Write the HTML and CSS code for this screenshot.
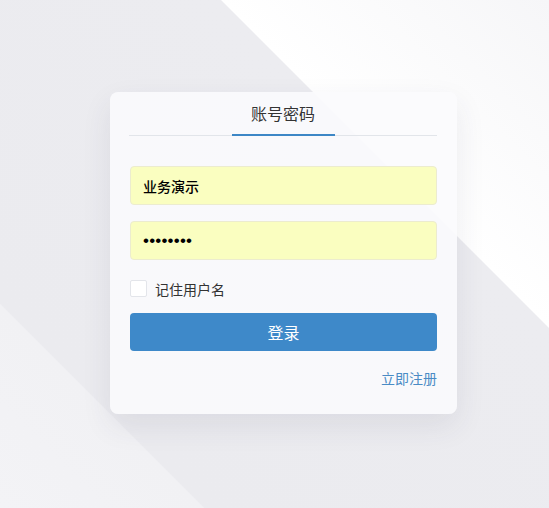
FILE: index.html
```html
<!DOCTYPE html>
<html lang="zh-CN">
<head>
<meta charset="utf-8">
<title>登录</title>
<link rel="stylesheet" href="styles.css">
</head>
<body>
<div class="page">
  <div class="card">
    <div class="tabs">
      <div class="tab active">账号密码</div>
    </div>
    <form class="form">
      <input class="field name" type="text" value="业务演示">
      <input class="field pw" type="password" value="12345678">
      <label class="remember"><span class="box"></span><span>记住用户名</span></label>
      <button class="submit" type="button">登录</button>
      <div class="links"><a class="register" href="#">立即注册</a></div>
    </form>
  </div>
</div>
</body>
</html>
```
FILE: styles.css
```css
* { box-sizing: border-box; }
html, body { margin: 0; height: 100%; }
body {
  font-family: "Microsoft YaHei", "Noto Sans CJK SC", "Noto Sans", sans-serif;
  background:
    linear-gradient(45deg, #f3f3f6 0, #f1f1f4 144px, #ebebef 145px, #ececf0 515px, #ffffff 516px, #f6f6f8 100%);
  overflow: hidden;
}
.page {
  padding: 92px 0 0 110px;
}
.card {
  width: 347px;
  height: 322px;
  background: rgba(250, 251, 253, 0.88);
  border-radius: 8px;
  box-shadow: 0 12px 30px rgba(60, 60, 90, 0.09);
  padding: 0 20px 0 19px;
}
.tabs {
  display: flex;
  justify-content: center;
  border-bottom: 1px solid #e2e5ea;
  height: 44px;
}
.tab {
  width: 103px;
  height: 44px;
  line-height: 42px;
  text-align: center;
  font-size: 16px;
  color: #333;
  border-bottom: 2px solid #3d87c6;
}
.form {
  display: flex;
  flex-direction: column;
  padding: 30px 0 0 1px;
}
.field {
  height: 39px;
  border: 1px solid #ececcf;
  border-radius: 4px;
  background: #fafec0;
  padding: 0 12px;
  font-family: inherit;
  font-size: 14px;
  color: #000;
  outline: none;
}
.field.name { font-weight: 500; }
.field.pw {
  font-family: "Liberation Sans", Arial, sans-serif;
  font-size: 17px;
  letter-spacing: 0.2px;
  padding-top: 1px;
}
.field + .field { margin-top: 16px; }
.remember {
  display: flex;
  align-items: center;
  gap: 8px;
  margin-top: 20px;
  height: 17px;
  font-size: 14px;
  color: #333;
}
.box {
  width: 17px;
  height: 17px;
  background: #fff;
  border: 1px solid #e3e5ea;
  border-radius: 2px;
}
.submit {
  margin-top: 16px;
  height: 38px;
  border: none;
  border-radius: 4px;
  background: #3e89c9;
  color: #fff;
  font-family: inherit;
  font-size: 16px;
}
.links {
  display: flex;
  justify-content: flex-end;
  margin-top: 17px;
}
.register {
  font-size: 14px;
  color: #4a8bc5;
  text-decoration: none;
  line-height: 20px;
}
```
